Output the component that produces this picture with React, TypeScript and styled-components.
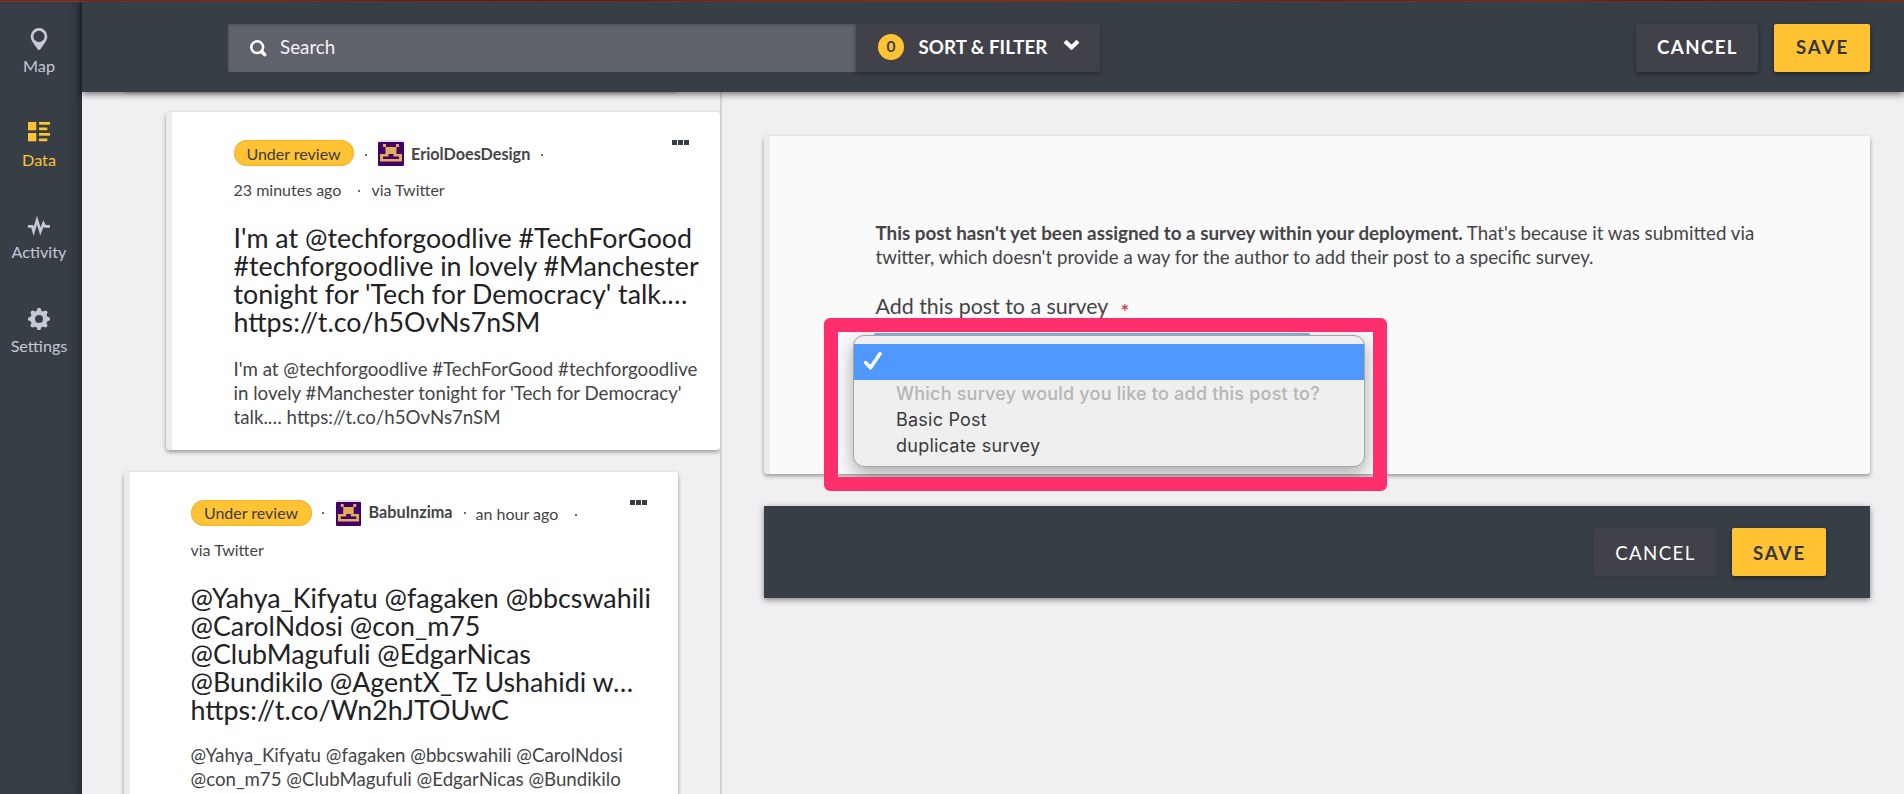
import React from "react";
import styled, { createGlobalStyle } from "styled-components";

const GlobalStyle = createGlobalStyle`
  * { box-sizing: border-box; }
  body {
    margin: 0;
    overflow: hidden;
    font-family: Lato, "Liberation Sans", sans-serif;
    color: #444447;
    background: #f0f0f3;
  }
`;

const Page = styled.div`
  display: flex;
  flex-direction: column;
  height: 794px;
`;

const TopStrip = styled.div`
  flex: none;
  height: 2px;
  background: linear-gradient(90deg, #6f2a1c, #7c3020 14%, #5c1f12 27%, #7c3020 40%, #8a3528 55%, #6b2819 70%, #7c3020 82%, #54200f 88%, #7c3020);
  border-bottom: 1px solid #7d3a33;
`;

const Shell = styled.div`
  display: flex;
  flex: 1;
  min-height: 0;
`;

const Sidebar = styled.nav`
  flex: none;
  width: 82px;
  padding-right: 4px;
  padding-top: 26px;
  background: #383e46;
  box-shadow: inset -9px 0 8px -6px rgba(15, 17, 30, 0.5);
`;

const NavItem = styled.a<{ $active?: boolean; $gap: number }>`
  display: flex;
  flex-direction: column;
  align-items: center;
  margin-top: ${(p) => p.$gap}px;
  font-size: 16.2px;
  line-height: 20px;
  color: ${(p) => (p.$active ? "#ffc334" : "#c5c9d3")};

  svg {
    display: block;
    margin-bottom: 6px;
  }
`;

const Main = styled.div`
  display: flex;
  flex: 1;
  flex-direction: column;
  min-width: 0;
`;

const Header = styled.header`
  position: relative;
  z-index: 2;
  display: flex;
  flex: none;
  height: 90px;
  padding: 22px 34px 0 146px;
  background: #383e46;
  box-shadow: 0 2px 7px rgba(0, 0, 0, 0.55);
`;

const SearchBox = styled.div`
  display: flex;
  align-items: center;
  gap: 13px;
  width: 628px;
  height: 48px;
  padding: 0 0 2px 22px;
  border-radius: 2px 0 0 2px;
  background: #60636b;
  box-shadow: inset 0 1px 3px rgba(0, 0, 0, 0.2);
  color: #f4f4f6;
  font-size: 18.8px;
  line-height: 24px;

  svg {
    margin-top: 2px;
  }
`;

const FilterButton = styled.button`
  display: flex;
  align-items: center;
  width: 244px;
  height: 48px;
  padding: 0 0 3px 22px;
  border: 0;
  border-radius: 0 2px 2px 0;
  background: #414249;
  box-shadow: 0 2px 4px rgba(0, 0, 0, 0.3);
  color: #fff;
  font: 700 18.75px/24px Lato, sans-serif;
  white-space: nowrap;

  svg {
    margin: -3px 0 0 16px;
  }
`;

const Count = styled.span`
  width: 26px;
  height: 26px;
  margin: 1px 14.5px 0 0;
  border-radius: 13px;
  background: #ffc334;
  color: #40424a;
  font-size: 15.5px;
  line-height: 25px;
  text-align: center;
`;

const Actions = styled.div`
  display: flex;
  gap: 16px;
  margin-left: auto;
`;

const Button = styled.button<{ $primary?: boolean; $light?: boolean; $low?: boolean; $width: number }>`
  width: ${(p) => p.$width}px;
  height: 48px;
  padding: ${(p) => (p.$low ? "1px 0 0 1px" : "0 0 3px 1px")};
  border: 0;
  border-radius: 2px;
  background: ${(p) => (p.$primary ? "#ffc334" : "#414249")};
  box-shadow: 0 2px 4px rgba(0, 0, 0, ${(p) => (p.$light ? 0.08 : 0.4)});
  color: ${(p) => (p.$primary ? "#33373e" : "#fff")};
  font: ${(p) => (p.$light ? 400 : 700)} 18.67px/24px Lato, sans-serif;
  letter-spacing: ${(p) => (p.$primary ? 1.9 : 1.4)}px;
`;

const Content = styled.div`
  display: flex;
  flex: 1;
  min-height: 0;
`;

const PostList = styled.section`
  flex: none;
  width: 640px;
  overflow: hidden;
  border-right: 2px solid #d2d2d2;
`;

const Scroller = styled.div`
  margin-top: -42px;
`;

const PostCard = styled.article<{ $shift?: boolean }>`
  position: relative;
  width: 554px;
  min-height: 40px;
  margin: 0 0 22px ${(p) => (p.$shift ? 84 : 42)}px;
  padding: 0 0 21px ${(p) => (p.$shift ? 61.5 : 60.5)}px;
  border-left: 6px solid #ececee;
  border-radius: 3px;
  background: #fff;
  box-shadow: 0 2px 4px rgba(0, 0, 0, 0.38);
`;

const MetaRow = styled.div`
  display: flex;
  align-items: center;
  height: 26px;
  font-size: 16px;
  line-height: 20px;
  white-space: nowrap;
`;

const PostHead = styled.div`
  padding-top: 28px;
`;

const SecondRow = styled(MetaRow)`
  height: 20px;
  margin-top: 14px;
`;

const Badge = styled.span<{ $w: number; $line: number }>`
  width: ${(p) => p.$w}px;
  height: 26px;
  border-radius: 13px;
  background: #ffc334;
  box-shadow: inset 0 0 2px rgba(170, 110, 0, 0.5);
  color: #3c3c40;
  line-height: ${(p) => p.$line}px;
  text-align: center;
`;

const Dot = styled.span<{ $before: number; $after?: number; $drop?: number }>`
  width: 2px;
  height: 2px;
  margin: ${(p) => p.$drop ?? 4}px ${(p) => p.$after ?? 0}px 0 ${(p) => p.$before}px;
  background: #6c6c70;
`;

const AvatarBox = styled.span<{ $right: number }>`
  height: 26px;
  margin-right: ${(p) => p.$right}px;
  border-radius: 2px;
  background: #e6e4e8;

  svg {
    display: block;
    margin-top: 2px;
  }
`;

const Author = styled.strong<{ $drop: number }>`
  margin-top: ${(p) => p.$drop}px;
  font-size: 16.2px;
`;

const Ago = styled.span<{ $drop?: number }>`
  margin-top: ${(p) => p.$drop ?? 0}px;
`;

const Title = styled.h1`
  margin: 24px 0 0;
  color: #222225;
  font-size: 26.8px;
  font-weight: 400;
  line-height: 28px;
  white-space: pre;
`;

const Body = styled.p<{ $top?: number }>`
  margin: ${(p) => p.$top ?? 21}px 0 0;
  font-size: 18.7px;
  line-height: 24px;
  white-space: pre;
`;

const MoreButton = styled.span`
  position: absolute;
  top: 28px;
  right: 31px;
  display: flex;
  gap: 1px;

  i {
    width: 5px;
    height: 5px;
    background: #383e46;
  }
`;

const Detail = styled.section`
  flex: 1;
  min-width: 0;
  padding: 44px 34px 0 42px;
`;

const FormCard = styled.div`
  height: 338px;
  padding: 85px 0 0 105.5px;
  border-left: 6px solid #ececee;
  border-radius: 3px;
  background: #fafafa;
  box-shadow: 0 2px 4px rgba(0, 0, 0, 0.38);
`;

const NoticeLine = styled.div`
  height: 24px;
  font-size: 18.72px;
  line-height: 24px;
  white-space: pre;

  strong {
    font-size: 18.82px;
  }
`;

const FieldLabel = styled.div`
  display: flex;
  height: 28px;
  margin-top: 23px;
  font-size: 21.4px;
  line-height: 28px;
`;

const Required = styled.span`
  height: 22px;
  margin: 9px 0 0 12px;
  color: #cf2f35;
  font-size: 22px;
  line-height: 22px;
`;

const SelectBox = styled.div`
  position: relative;
  width: 438px;
  height: 46px;
  margin: 13px 0 0 -3px;
  border: 3px solid #86b2e6;
  border-radius: 4px;
`;

const Menu = styled.div`
  position: absolute;
  top: -1px;
  left: -23px;
  width: 512px;
  height: 132px;
  padding-top: 8px;
  border: 1px solid #a4a4a4;
  border-radius: 11px;
  background: #efefef;
  box-shadow: 0 7px 18px rgba(0, 0, 0, 0.32);
`;

const SelectedOption = styled.div`
  height: 36px;
  margin-bottom: 1px;
  padding: 8px 0 0 10px;
  background: #4f98ff;
`;

const Option = styled.div<{ $muted?: boolean; $spacing: number }>`
  padding-left: 42.5px;
  color: ${(p) => (p.$muted ? "#b5b5b5" : "#3a3a3c")};
  font-family: Inter, sans-serif;
  font-size: 18px;
  font-weight: ${(p) => (p.$muted ? 500 : 400)};
  letter-spacing: ${(p) => p.$spacing}px;
  line-height: 26px;
  white-space: nowrap;
`;

const Highlight = styled.div`
  position: absolute;
  top: -18px;
  left: -52px;
  width: 563px;
  height: 173px;
  border: 14px solid #ff2f6d;
  border-radius: 6px;
`;

const FormFooter = styled.footer`
  display: flex;
  height: 92px;
  margin-top: 32px;
  padding: 22px 44px 0 0;
  background: #383e46;
  box-shadow: 0 2px 6px rgba(0, 0, 0, 0.45);
`;

const PinIcon = () => (
  <svg width="22" height="22" viewBox="0 0 22 22">
    <path fill="currentColor" fillRule="evenodd" d="M11 0a8.3 8.3 0 0 1 8.3 8.3c0 2.6-1.2 4.7-2.9 7.2L12.4 21.3q-1.4 1.4-2.8 0L5.6 15.5C3.9 13 2.7 10.9 2.7 8.3A8.3 8.3 0 0 1 11 0zm0 2.8a5.6 5.6 0 1 0 0 11.2a5.6 5.6 0 0 0 0-11.2z" />
  </svg>
);

const DataIcon = () => (
  <svg width="22" height="22" viewBox="0 0 22 22" fill="currentColor">
    <rect width="8.3" height="8.3" />
    <rect y="11" width="8.3" height="8.3" />
    <rect x="11" width="11" height="2.7" />
    <rect x="11" y="5.5" width="8.3" height="2.7" />
    <rect x="11" y="11" width="11" height="2.7" />
    <rect x="11" y="16.5" width="8.3" height="2.7" />
  </svg>
);

const ActivityIcon = () => (
  <svg width="22" height="22" viewBox="0 0 22 22">
    <path
      fill="none"
      stroke="currentColor"
      strokeWidth="2.6"
      d="M0 12.4h4.2l1.4 5L9 6.2l3.4 11.2 3-8 1.6 3h5"
    />
  </svg>
);

const teeth = [0, 45, 90, 135, 180, 225, 270, 315];

const GearIcon = () => (
  <svg width="22" height="22" viewBox="0 0 22 22">
    <circle cx="11" cy="11" r="6.3" fill="none" stroke="currentColor" strokeWidth="4.6" />
    {teeth.map((a) => (
      <path key={a} fill="currentColor" transform={`rotate(${a} 11 11)`} d="M8.3 3.6 9.4.6Q9.6 0 10.2 0h1.6q.6 0 .8.6l1.1 3z" />
    ))}
  </svg>
);

const SearchIcon = () => (
  <svg width="17" height="17" viewBox="0 0 17 17" fill="none" stroke="#fff">
    <circle cx="7.2" cy="7.2" r="5.9" strokeWidth="2.5" />
    <path d="m11.6 11.6 3 3" strokeWidth="3.6" strokeLinecap="round" />
  </svg>
);

const ChevronIcon = () => (
  <svg width="17" height="12" viewBox="0 0 17 12" fill="none" stroke="#fff">
    <path d="m2 2.2 6.5 6.2L15 2.2" strokeWidth="4.2" />
  </svg>
);

const CheckIcon = () => (
  <svg width="18" height="18" viewBox="0 0 18 18" fill="none" stroke="#fff">
    <path d="M1.7 10.6 6.5 15.8 16 1.7" strokeWidth="3.6" strokeLinecap="round" strokeLinejoin="round" />
  </svg>
);

const Avatar = ({ width }: { width: number }) => (
  <svg width={width} height="24" viewBox="0 0 26 24" preserveAspectRatio="none">
    <rect width="26" height="24" rx="1" fill="#42006c" />
    <path fill="#e0af58" d="M5 2h3v3h10V2h3v3h-2.5v7H24v7.5H2V12h5.5V5H5z" />
    <path fill="#42006c" d="M10.5 12h5v2.5H21V17H5v-2.5h5.5z" />
  </svg>
);

const More = () => (
  <MoreButton>
    <i />
    <i />
    <i />
  </MoreButton>
);

export default function App() {
  return (
    <Page>
      <GlobalStyle />
      <TopStrip />
      <Shell>
        <Sidebar>
          <NavItem $gap={0}><PinIcon />Map</NavItem>
          <NavItem $gap={46} $active><DataIcon />Data</NavItem>
          <NavItem $gap={44}><ActivityIcon />Activity</NavItem>
          <NavItem $gap={46}><GearIcon />Settings</NavItem>
        </Sidebar>
        <Main>
          <Header>
            <SearchBox><SearchIcon />Search</SearchBox>
            <FilterButton>
              <Count>0</Count>
              SORT &amp; FILTER
              <ChevronIcon />
            </FilterButton>
            <Actions>
              <Button $width={122}>CANCEL</Button>
              <Button $width={96} $primary>SAVE</Button>
            </Actions>
          </Header>
          <Content>
            <PostList>
              <Scroller>
                <PostCard />
                <PostCard $shift>
                  <More />
                  <PostHead>
                    <MetaRow>
                      <Badge $w={120} $line={27}>Under review</Badge>
                      <Dot $before={11} $after={11} />
                      <AvatarBox $right={7.5}><Avatar width={26} /></AvatarBox>
                      <Author $drop={2}>EriolDoesDesign</Author>
                      <Dot $before={11} />
                    </MetaRow>
                    <SecondRow>
                      <Ago>23 minutes ago</Ago>
                      <Dot $before={17} $after={11} $drop={2} />
                      <Ago>via Twitter</Ago>
                    </SecondRow>
                  </PostHead>
                  <Title>{"I'm at @techforgoodlive #TechForGood\n#techforgoodlive in lovely #Manchester\ntonight for 'Tech for Democracy' talk.…\nhttps://t.co/h5OvNs7nSM"}</Title>
                  <Body>{"I'm at @techforgoodlive #TechForGood #techforgoodlive\nin lovely #Manchester tonight for 'Tech for Democracy'\ntalk.… https://t.co/h5OvNs7nSM"}</Body>
                </PostCard>
                <PostCard>
                  <More />
                  <PostHead>
                    <MetaRow>
                      <Badge $w={121} $line={25}>Under review</Badge>
                      <Dot $before={10} $after={12} $drop={0} />
                      <AvatarBox $right={8}><Avatar width={25} /></AvatarBox>
                      <Author $drop={-2}>BabuInzima</Author>
                      <Dot $before={11} $after={10} $drop={0} />
                      <Ago $drop={2}>an hour ago</Ago>
                      <Dot $before={17} $drop={4} />
                    </MetaRow>
                    <SecondRow>
                      <Ago>via Twitter</Ago>
                    </SecondRow>
                  </PostHead>
                  <Title>{"@Yahya_Kifyatu @fagaken @bbcswahili\n@CarolNdosi @con_m75\n@ClubMagufuli @EdgarNicas\n@Bundikilo @AgentX_Tz Ushahidi w…\nhttps://t.co/Wn2hJTOUwC"}</Title>
                  <Body $top={19}>{"@Yahya_Kifyatu @fagaken @bbcswahili @CarolNdosi\n@con_m75 @ClubMagufuli @EdgarNicas @Bundikilo"}</Body>
                </PostCard>
              </Scroller>
            </PostList>
            <Detail>
              <FormCard>
                <NoticeLine>
                  <strong>This post hasn't yet been assigned to a survey within your deployment.</strong>
                  {" That's because it was submitted via"}
                </NoticeLine>
                <NoticeLine>twitter, which doesn't provide a way for the author to add their post to a specific survey.</NoticeLine>
                <FieldLabel>
                  Add this post to a survey
                  <Required>*</Required>
                </FieldLabel>
                <SelectBox>
                  <Menu>
                    <SelectedOption><CheckIcon /></SelectedOption>
                    <Option $muted $spacing={0.21}>Which survey would you like to add this post to?</Option>
                    <Option $spacing={0.22}>Basic Post</Option>
                    <Option $spacing={0.24}>duplicate survey</Option>
                  </Menu>
                  <Highlight />
                </SelectBox>
              </FormCard>
              <FormFooter>
                <Actions>
                  <Button $width={122} $light $low>CANCEL</Button>
                  <Button $width={94} $primary $low>SAVE</Button>
                </Actions>
              </FormFooter>
            </Detail>
          </Content>
        </Main>
      </Shell>
    </Page>
  );
}
